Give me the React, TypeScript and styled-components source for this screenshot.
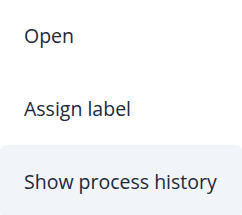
import React from 'react'
import styled, { createGlobalStyle } from 'styled-components'

const Global = createGlobalStyle`
  html, body {
    margin: 0;
    padding: 0;
    background: #ffffff;
  }
  body {
    font-family: "Open Sans", "Noto Sans", sans-serif;
  }
`

const Menu = styled.ul`
  list-style: none;
  margin: -1px 0 0;
  padding: 0;
  width: 242px;
  display: flex;
  flex-direction: column;
`

const Item = styled.li<{ $active?: boolean }>`
  display: flex;
  align-items: center;
  height: 73px;
  padding-left: 24px;
  border-radius: 6px;
  font-size: 19.5px;
  line-height: 1;
  color: #1e293b;
  background: ${p => (p.$active ? '#f1f4f8' : 'transparent')};
  cursor: pointer;
`

const items = ['Open', 'Assign label', 'Show process history']

const App: React.FC = () => (
  <>
    <Global />
    <Menu>
      {items.map((label, i) => (
        <Item key={label} $active={i === 2}>
          {label}
        </Item>
      ))}
    </Menu>
  </>
)

export default App
